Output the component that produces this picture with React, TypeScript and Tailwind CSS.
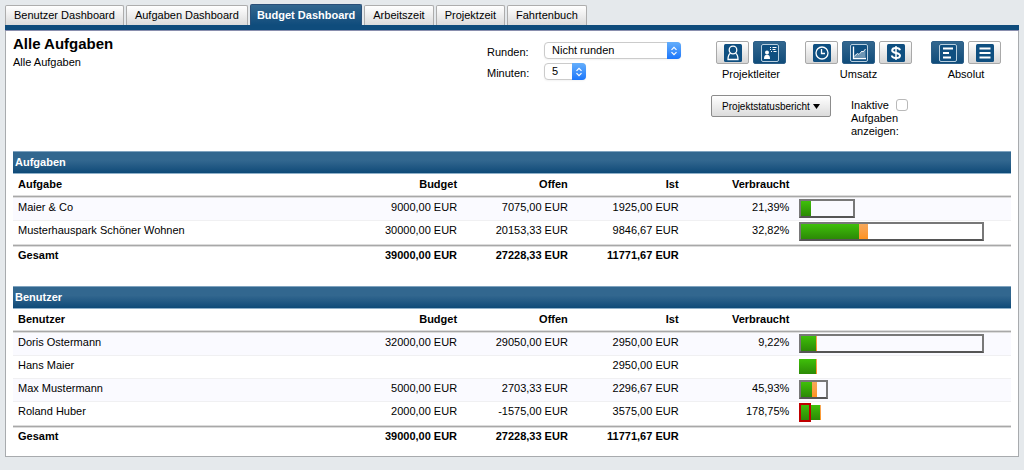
import { useState } from "react"
import type { ReactNode } from "react"
import clsx from "clsx"

type Bar = { frame?: number; used: number; planned: number; over?: boolean }
type Row = { name: string; budget: string; open: string; actual: string; percent: string; bar: Bar }

const TABS = ["Benutzer Dashboard", "Aufgaben Dashboard", "Budget Dashboard", "Arbeitszeit", "Projektzeit", "Fahrtenbuch"]

const TASKS: Row[] = [
    { name: "Maier & Co", budget: "9000,00 EUR", open: "7075,00 EUR", actual: "1925,00 EUR", percent: "21,39%", bar: { frame: 56, used: 12, planned: 0 } },
    { name: "Musterhauspark Schöner Wohnen", budget: "30000,00 EUR", open: "20153,33 EUR", actual: "9846,67 EUR", percent: "32,82%", bar: { frame: 185, used: 60, planned: 9 } },
]

const USERS: Row[] = [
    { name: "Doris Ostermann", budget: "32000,00 EUR", open: "29050,00 EUR", actual: "2950,00 EUR", percent: "9,22%", bar: { frame: 185, used: 17, planned: 1 } },
    { name: "Hans Maier", budget: "", open: "", actual: "2950,00 EUR", percent: "", bar: { used: 17, planned: 1 } },
    { name: "Max Mustermann", budget: "5000,00 EUR", open: "2703,33 EUR", actual: "2296,67 EUR", percent: "45,93%", bar: { frame: 29, used: 13, planned: 5 } },
    { name: "Roland Huber", budget: "2000,00 EUR", open: "-1575,00 EUR", actual: "3575,00 EUR", percent: "178,75%", bar: { frame: 12, used: 21, planned: 1, over: true } },
]

function Icon({ children }: { children: ReactNode }) {
    return (
        <svg viewBox="0 0 18 18" className="size-[18px]" fill="none" stroke="#fff" strokeWidth="1.3" aria-hidden="true">
            <rect width="18" height="18" rx="1.5" fill="#0f4f80" stroke="none" />
            {children}
        </svg>
    )
}

const IconFrame = () => <rect x="0.5" y="0.5" width="17" height="17" rx="1.5" stroke="#b9cfdf" strokeWidth="1" />

const ICONS = {
    user: (
        <Icon>
            <circle cx="9" cy="6" r="3.8" />
            <path d="M6.500 9.300C4.500 10.500 4 12.500 4 15.500h10c0-3-.5-5-2.500-6.200" />
        </Icon>
    ),
    manager: (
        <Icon>
            <IconFrame />
            <circle cx="6" cy="8.500" r="2" fill="#fff" stroke="none" />
            <path d="M3 15c0-3 .8-4.200 3-4.200S9 12 9 15z" fill="#fff" stroke="none" />
            <path d="M9 3.500h1M11.500 3.500h4M9 5.500h1M11.500 5.500h3M10 7.500h1M12.500 7.500h3" strokeWidth="1" />
        </Icon>
    ),
    clock: (
        <Icon>
            <circle cx="9" cy="9" r="6" />
            <path d="M8.500 5v4.500H12" />
        </Icon>
    ),
    chart: (
        <Icon>
            <IconFrame />
            <path d="M4 13.500V12l3-2.500 2 1.500 3-4 1 1 2.500-3v8.500z" fill="#6d96b4" stroke="none" />
            <path d="M3.500 2.500v12h12.500" />
            <path d="M4.500 12l3-2.500 1.500 1 3-3.500 1 1L15.500 5" strokeWidth="0.9" />
        </Icon>
    ),
    dollar: (
        <Icon>
            <path d="M13 6.300C12.700 4.700 11.200 4 9 4S5.200 4.800 5.200 6.400C5.200 9.800 13 8 13 11.500c0 1.700-1.600 2.500-4 2.500s-4-.8-4.200-2.500" strokeWidth="2" />
            <path d="M9 2v14" strokeWidth="1.500" />
        </Icon>
    ),
    left: (
        <Icon>
            <IconFrame />
            <path d="M4 4.500h10M4 9h6M4 13.500h8" strokeWidth="2" />
        </Icon>
    ),
    lines: (
        <Icon>
            <path d="M3.500 4.500h11M3.500 9h11M3.500 13.500h11" strokeWidth="2" />
        </Icon>
    ),
}

type IconName = keyof typeof ICONS

const GROUPS: { label: string; items: { icon: IconName; title: string }[]; initial: number }[] = [
    { label: "Projektleiter", items: [{ icon: "user", title: "Benutzer" }, { icon: "manager", title: "Projektleiter" }], initial: 1 },
    { label: "Umsatz", items: [{ icon: "clock", title: "Zeit" }, { icon: "chart", title: "Umsatz" }, { icon: "dollar", title: "Kosten" }], initial: 1 },
    { label: "Absolut", items: [{ icon: "left", title: "Absolut" }, { icon: "lines", title: "Relativ" }], initial: 0 },
]

function ToggleGroup({ label, items, initial }: (typeof GROUPS)[number]) {
    const [active, setActive] = useState(initial)

    return (
        <div className="flex flex-col items-center gap-1">
            <div className="flex gap-1">
                {items.map((item, i) => (
                    <button
                        key={item.icon}
                        type="button"
                        aria-label={item.title}
                        aria-pressed={i === active}
                        onClick={() => setActive(i)}
                        className={clsx(
                            "flex h-[23px] w-[33px] items-center justify-center rounded-xs border",
                            i === active
                                ? "border-[#2d5f88] bg-linear-to-b from-[#32678f] to-[#0f4c7a]"
                                : "border-[#a9a9a9] bg-linear-to-b from-white to-[#d6d6d6]",
                        )}
                    >
                        {ICONS[item.icon]}
                    </button>
                ))}
            </div>
            <span>{label}</span>
        </div>
    )
}

function Select({ id, options, className }: { id: string; options: string[]; className: string }) {
    return (
        <div className={clsx("relative h-[17px]", className)}>
            <select id={id} className="block h-full w-full appearance-none rounded border border-[#cbcbcb] bg-white pl-[7px] text-[11px] leading-[15px] shadow-xs">
                {options.map((o) => <option key={o}>{o}</option>)}
            </select>
            <span className="pointer-events-none absolute inset-y-0 right-0 flex w-[14px] items-center justify-center rounded-r bg-linear-to-b from-[#64aefb] to-[#1a76fb]">
                <svg viewBox="0 0 8 10" className="h-[10px] w-2" fill="none" stroke="#fff" strokeWidth="1.200" aria-hidden="true">
                    <path d="M1.500 3.800L4 1.300l2.500 2.500M1.500 6.200L4 8.700l2.500-2.500" />
                </svg>
            </span>
        </div>
    )
}

function UsageBar({ frame, used, planned, over }: Bar) {
    return (
        <div className="relative flex h-[19px] items-center">
            <div className="h-[15px] bg-linear-to-b from-[#3fc00a] to-[#2c8a06]" style={{ width: used }} />
            <div className="h-[15px] bg-linear-to-b from-[#f5a85a] to-[#ff931c]" style={{ width: planned }} />
            {frame && (
                <div
                    className={clsx(
                        "absolute inset-y-0 left-0 border-2",
                        over ? "border-[#c00000]" : "border-[#787878] border-b-[#555]",
                    )}
                    style={{ width: frame }}
                />
            )}
        </div>
    )
}

function BudgetTable({ title, column, rows }: { title: string; column: string; rows: Row[] }) {
    return (
        <section>
            <h2 className="h-[23px] border-y border-t-[#7fa3bf] border-b-[#8fb0c9] bg-linear-to-b from-[#32678f] from-40% to-[#0d4a78] pl-[2px] text-[11px] leading-[21px] font-bold text-white">
                {title}
            </h2>
            <table className="w-full table-fixed border-separate border-spacing-0">
                <colgroup>
                    <col className="w-[34%]" />
                    <col className="w-[11%]" />
                    <col className="w-[11.1%]" />
                    <col className="w-[11.1%]" />
                    <col className="w-[11.1%]" />
                    <col />
                </colgroup>
                <thead>
                    <tr className="h-6 text-right [&>th]:px-[5px] [&>th]:pb-1 [&>th]:shadow-[inset_0_-1px_#dcdcdc,inset_0_-2px_#a8a8a8,inset_0_-3px_#dcdcdc]">
                        <th className="text-left">{column}</th>
                        <th>Budget</th>
                        <th>Offen</th>
                        <th>Ist</th>
                        <th>Verbraucht</th>
                        <th aria-label="Verlauf" />
                    </tr>
                </thead>
                <tbody>
                    {rows.map((r) => (
                        <tr key={r.name} className="h-[23px] text-right odd:bg-[#fafaff] [&>td]:border-b [&>td]:border-[#f0f0f2] [&>td]:px-[5px] last:[&>td]:border-transparent">
                            <td className="pb-[3px] text-left">{r.name}</td>
                            <td className="pb-[3px]">{r.budget}</td>
                            <td className="pb-[3px]">{r.open}</td>
                            <td className="pb-[3px]">{r.actual}</td>
                            <td className="pb-[3px]">{r.percent}</td>
                            <td className="pt-px pb-[2px]"><UsageBar {...r.bar} /></td>
                        </tr>
                    ))}
                </tbody>
                <tfoot>
                    <tr className="h-6 text-right font-bold [&>td]:px-[5px] [&>td]:pb-[2px] [&>td]:shadow-[inset_0_1px_#dcdcdc,inset_0_2px_#a8a8a8,inset_0_3px_#dcdcdc]">
                        <td className="text-left">Gesamt</td>
                        <td>39000,00 EUR</td>
                        <td>27228,33 EUR</td>
                        <td>11771,67 EUR</td>
                        <td />
                        <td />
                    </tr>
                </tfoot>
            </table>
        </section>
    )
}

export default function App() {
    const [tab, setTab] = useState("Budget Dashboard")

    return (
        <div className="min-h-screen bg-[#e5e9ec] px-[5px] pt-1 font-['Liberation_Sans',Arial,sans-serif] text-[11px] leading-[13px] text-black">
            <nav className="flex items-end gap-[2px]">
                {TABS.map((t) => (
                    <button
                        key={t}
                        type="button"
                        onClick={() => setTab(t)}
                        className={clsx(
                            "rounded-t-xs border border-b-0",
                            t === tab
                                ? "h-[21px] border-[#2a4f78] bg-linear-to-b from-[#32678f] to-[#0f4c7c] px-[6px] font-bold text-white"
                                : "h-5 border-[#adadad] bg-linear-to-b from-white to-[#dcdcdc] px-2",
                        )}
                    >
                        {t}
                    </button>
                ))}
            </nav>
            <main className="border border-t-0 border-[#a8abae] bg-white">
                <div className="-mx-px h-[6px] border-b border-[#8a8fae] bg-[#0f4c7c]" />
                <div className="px-[7px] pb-[7px]">
                    <header className="flex min-h-[120px] items-start">
                        <div className="flex-1 pt-1">
                            <h1 className="text-[15px] leading-[18px] font-bold">Alle Aufgaben</h1>
                            <p className="pt-[3px]">Alle Aufgaben</p>
                        </div>
                        <div className="mr-[30px] grid grid-cols-[57px_auto] items-end gap-y-1 pt-[11px]">
                            <label htmlFor="rounding">Runden:</label>
                            <Select id="rounding" options={["Nicht runden", "Aufrunden", "Abrunden"]} className="w-[137px]" />
                            <label htmlFor="minutes">Minuten:</label>
                            <Select id="minutes" options={["5", "10", "15", "30"]} className="w-[42px]" />
                        </div>
                        <div className="w-[300px] pt-[10px]">
                            <div className="flex gap-[19px] pl-[5px]">
                                {GROUPS.map((g) => <ToggleGroup key={g.label} {...g} />)}
                            </div>
                            <div className="flex items-start gap-5 pt-[14px]">
                                <button type="button" className="flex h-[22px] w-[120px] items-center justify-center gap-[3px] rounded-xs border border-[#8c8c8c] bg-linear-to-b from-white to-[#dcdcdc] text-[10px]">
                                    Projektstatusbericht
                                    <svg viewBox="0 0 7 5" className="h-[5px] w-[7px]" aria-hidden="true"><path d="M0 0h7L3.500 5z" /></svg>
                                </button>
                                <div className="flex items-start pt-1">
                                    <label htmlFor="inactive" className="w-[45px]">Inaktive Aufgaben anzeigen:</label>
                                    <input id="inactive" type="checkbox" className="size-3 appearance-none rounded-[3px] border border-[#b9b9b9] bg-white checked:bg-[#1a76fb]" />
                                </div>
                            </div>
                        </div>
                    </header>
                    <div className="flex flex-col gap-[18px]">
                        <BudgetTable title="Aufgaben" column="Aufgabe" rows={TASKS} />
                        <BudgetTable title="Benutzer" column="Benutzer" rows={USERS} />
                    </div>
                </div>
            </main>
        </div>
    )
}
